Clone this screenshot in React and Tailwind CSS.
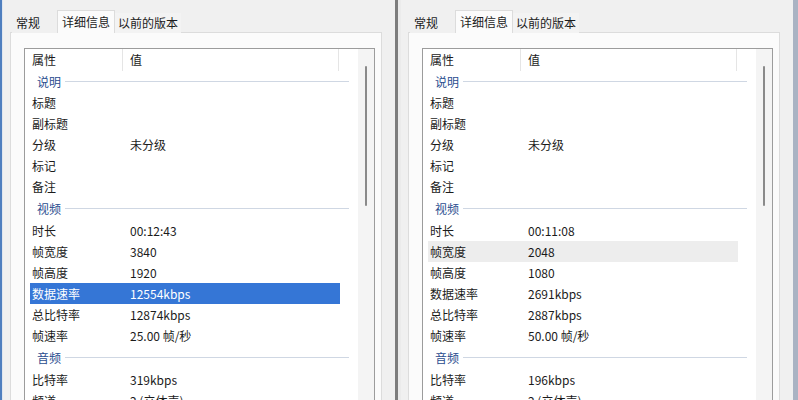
import React from 'react';

const FONT = { fontFamily: '"Segoe UI", "Noto Sans CJK SC", "Noto Sans", sans-serif' };

const leftRows = [
  { type: 'section', label: '说明', h: 'h-[21px]' },
  { label: '标题', value: '' },
  { label: '副标题', value: '' },
  { label: '分级', value: '未分级' },
  { label: '标记', value: '' },
  { label: '备注', value: '' },
  { type: 'section', label: '视频', h: 'h-[23px]' },
  { label: '时长', value: '00:12:43' },
  { label: '帧宽度', value: '3840' },
  { label: '帧高度', value: '1920' },
  { label: '数据速率', value: '12554kbps', state: 'selected' },
  { label: '总比特率', value: '12874kbps' },
  { label: '帧速率', value: '25.00 帧/秒' },
  { type: 'section', label: '音频', h: 'h-[23px]' },
  { label: '比特率', value: '319kbps' },
  { label: '频道', value: '2 (立体声)' },
];

const rightRows = [
  { type: 'section', label: '说明', h: 'h-[21px]' },
  { label: '标题', value: '' },
  { label: '副标题', value: '' },
  { label: '分级', value: '未分级' },
  { label: '标记', value: '' },
  { label: '备注', value: '' },
  { type: 'section', label: '视频', h: 'h-[23px]' },
  { label: '时长', value: '00:11:08' },
  { label: '帧宽度', value: '2048', state: 'hover' },
  { label: '帧高度', value: '1080' },
  { label: '数据速率', value: '2691kbps' },
  { label: '总比特率', value: '2887kbps' },
  { label: '帧速率', value: '50.00 帧/秒' },
  { type: 'section', label: '音频', h: 'h-[23px]' },
  { label: '比特率', value: '196kbps' },
  { label: '频道', value: '2 (立体声)' },
];

const Row = ({ row }) => {
  if (row.type === 'section') {
    return (
      <div className={`${row.h} flex items-center pl-[12px] pr-[9px]`}>
        <span className="text-[#2a4d8f]">{row.label}</span>
        <div className="flex-1 h-px bg-[#cfd7e3] ml-[4px]" />
      </div>
    );
  }
  const bg =
    row.state === 'selected'
      ? 'bg-[#3576d6] text-white'
      : row.state === 'hover'
      ? 'bg-[#ededed] text-[#1b1b1b]'
      : 'text-[#1b1b1b]';
  return (
    <div className={`h-[21px] ml-[5px] w-[310px] flex items-center ${bg}`}>
      <span className="w-[100px] pl-[2px] whitespace-nowrap">{row.label}</span>
      <span className="whitespace-nowrap">{row.value}</span>
    </div>
  );
};

const Panel = ({ rows, edgeLeft, edgeRight, width }) => (
  <div className={`${width} h-[400px] shrink-0 flex bg-[#f0f0f0]`}>
    <div className={`w-[3px] shrink-0 ${edgeLeft}`} />
    <div className="flex-1 flex flex-col pt-[10px] pl-[7px]">
      {/* tabs */}
      <div className="h-[23px] flex items-end pl-[2px] relative z-10 whitespace-nowrap">
        <div className="h-[20px] w-[45px] flex items-center pl-[4px] text-[#1b1b1b] bg-[#f0f0f0]">常规</div>
        <div className="h-[23px] w-[58px] flex items-center pl-[4px] bg-[#fbfbfb] border-x border-t border-[#dcdcdc] text-[#1b1b1b]">
          详细信息
        </div>
        <div className="h-[20px] w-[66px] flex items-center pl-[3px] bg-[#f3f3f3] text-[#1b1b1b]">以前的版本</div>
      </div>
      {/* tab page */}
      <div className="-mt-px w-[372px] flex-1 bg-[#fbfbfb] border border-[#dcdcdc] pt-[15px] pl-[13px]">
        <div className="w-[351px] h-[400px] bg-white border border-[#9c9c9c] flex">
          <div className="flex-1 flex flex-col">
            {/* header */}
            <div className="h-[22px] flex items-stretch text-[#1b1b1b]">
              <div className="w-[98px] pl-[7px] flex items-center border-r border-[#e5e5e5]">属性</div>
              <div className="w-[216px] pl-[7px] flex items-center border-r border-[#e5e5e5]">值</div>
            </div>
            {rows.map((r, i) => (
              <Row key={i} row={r} />
            ))}
          </div>
          {/* scrollbar */}
          <div className="w-[16px] shrink-0 bg-[#f4f4f4] flex justify-center pt-[17px]">
            <div className="w-[2px] h-[140px] bg-[#8a8a8a] rounded-full" />
          </div>
        </div>
      </div>
    </div>
    <div className={`w-[3px] shrink-0 ${edgeRight}`} />
  </div>
);

export default function App() {
  return (
    <div className="w-[798px] h-[400px] overflow-hidden flex text-[12px] leading-none" style={FONT}>
      <Panel
        rows={leftRows}
        width="w-[398px]"
        edgeLeft="bg-[#4f7fbf] border-r border-[#dfe6ef]"
        edgeRight="bg-[#7d7d7d]"
      />
      <Panel
        rows={rightRows}
        width="w-[400px]"
        edgeLeft="bg-[#ebebeb]"
        edgeRight="bg-[#aab3c3] w-[5px]"
      />
    </div>
  );
}
